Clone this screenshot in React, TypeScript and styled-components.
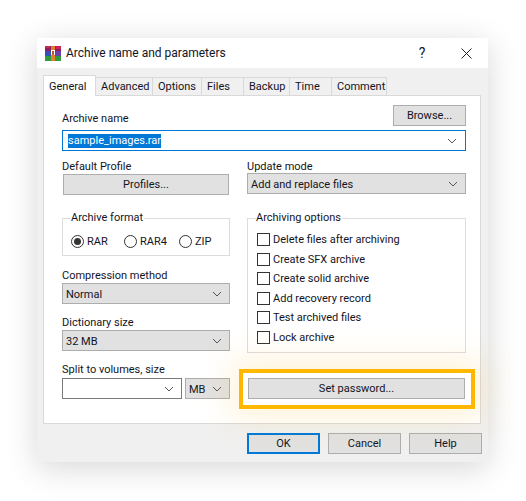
import React from 'react';
import styled, { createGlobalStyle } from 'styled-components';

const GlobalStyle = createGlobalStyle`
  html, body {
    margin: 0;
    padding: 0;
    background: #ffffff;
  }
  * {
    box-sizing: border-box;
  }
`;

const Page = styled.div`
  width: 526px;
  height: 501px;
  padding: 38px 38px 39px 37px;
  overflow: hidden;
  font-family: Roboto, 'Open Sans', sans-serif;
  font-size: 11px;
  color: #14141e;
`;

const Dialog = styled.div`
  width: 451px;
  height: 424px;
  background: #f0f0f0;
  box-shadow: 0 6px 30px rgba(0, 0, 0, 0.16);
`;

const TitleBar = styled.div`
  height: 30px;
  background: #ffffff;
  display: flex;
  align-items: center;
  padding-left: 8px;
`;

const Title = styled.span`
  margin-left: 5px;
  font-size: 12px;
  flex: 1;
`;

const HelpMark = styled.span`
  width: 46px;
  text-align: center;
  font-size: 14px;
`;

const CloseButton = styled.span`
  width: 43px;
  display: flex;
  justify-content: center;
`;

const Body = styled.div`
  padding: 7px 7px 0 6px;
`;

const TabRow = styled.div`
  display: flex;
  align-items: flex-end;
  height: 21px;
  margin-bottom: -1px;
  position: relative;
`;

const Tab = styled.div<{ $w: number; $active?: boolean }>`
  width: ${p => p.$w}px;
  height: ${p => (p.$active ? 21 : 19)}px;
  border: 1px solid #d9d9d9;
  border-left-width: ${p => (p.$active ? 1 : 0)}px;
  border-bottom-width: ${p => (p.$active ? 0 : 1)}px;
  background: ${p => (p.$active ? '#ffffff' : '#f0f0f0')};
  display: flex;
  align-items: center;
  padding-left: 5px;
  white-space: nowrap;
  position: relative;
  z-index: ${p => (p.$active ? 1 : 0)};
`;

const Panel = styled.div`
  width: 438px;
  height: 329px;
  background: #ffffff;
  border: 1px solid #d9d9d9;
  padding: 9px 0 0 18px;
`;

const NameHead = styled.div`
  width: 404px;
  height: 21px;
  display: flex;
  align-items: flex-end;
  justify-content: space-between;
`;

const Label = styled.div<{ $tight?: boolean; $top?: number }>`
  height: 17px;
  line-height: 17px;
  padding-top: 1px;
  white-space: nowrap;
  margin-top: ${p => p.$top ?? 0}px;
  margin-bottom: ${p => (p.$tight ? -1 : 0)}px;
`;

const Button = styled.div<{ $w?: number; $focus?: boolean }>`
  width: ${p => (p.$w ? `${p.$w}px` : 'auto')};
  height: 21px;
  background: #e1e1e1;
  border: ${p => (p.$focus ? '2px solid #0078d7' : '1px solid #adadad')};
  display: flex;
  align-items: center;
  justify-content: center;
  white-space: nowrap;
`;

const InsetButton = styled(Button)`
  margin: 0 1px;
`;

const NameCombo = styled.div`
  width: 404px;
  height: 21px;
  margin-top: 4px;
  border: 1px solid #0078d7;
  background: #ffffff;
  display: flex;
  align-items: center;
  padding: 0 8px 0 5px;
  justify-content: space-between;
`;

const SelectedText = styled.span`
  background: #0078d7;
  color: #ffffff;
  height: 14px;
  line-height: 14px;
`;

const Columns = styled.div`
  width: 404px;
  margin-top: 6px;
  display: grid;
  grid-template-columns: 168px 219px;
  column-gap: 17px;
`;

const Column = styled.div`
  display: flex;
  flex-direction: column;
`;

const Select = styled.div<{ $w?: number; $white?: boolean }>`
  width: ${p => (p.$w ? `${p.$w}px` : '100%')};
  height: 21px;
  background: ${p => (p.$white ? '#ffffff' : '#e1e1e1')};
  border: 1px solid ${p => (p.$white ? '#7a7a7a' : '#adadad')};
  display: flex;
  align-items: center;
  justify-content: space-between;
  padding: 1px 7px 0 3px;
  white-space: nowrap;
`;

const Group = styled.fieldset<{ $h: number; $top: number }>`
  margin: ${p => p.$top}px 0 0 0;
  padding: 0 0 0 9px;
  height: ${p => p.$h}px;
  border: 1px solid #dcdcdc;
  min-inline-size: 0;
`;

const Legend = styled.legend`
  padding: 0 1px 0 0;
  margin-left: -1px;
  line-height: 16px;
  height: 16px;
`;

const RadioRow = styled.div`
  display: flex;
  align-items: center;
  height: 20px;
  margin: 5px 0 0 -1px;
`;

const RadioItem = styled.div<{ $w: number }>`
  width: ${p => p.$w}px;
  display: flex;
  align-items: center;
  gap: 3px;
`;

const RadioMark = styled.span<{ $on?: boolean }>`
  width: 13px;
  height: 13px;
  border-radius: 50%;
  border: 1px solid #333333;
  background: #ffffff;
  display: flex;
  align-items: center;
  justify-content: center;

  &::after {
    content: '';
    display: ${p => (p.$on ? 'block' : 'none')};
    width: 7px;
    height: 7px;
    border-radius: 50%;
    background: #333333;
  }
`;

const CheckList = styled.div`
  margin-top: 4px;
  display: flex;
  flex-direction: column;
`;

const CheckRow = styled.div`
  height: 19.5px;
  display: flex;
  align-items: center;
  gap: 3px;
  white-space: nowrap;
`;

const CheckBox = styled.span`
  width: 13px;
  height: 13px;
  border: 1px solid #333333;
  background: #ffffff;
`;

const SplitRow = styled.div`
  display: flex;
  justify-content: space-between;
  margin-top: 1px;
`;

const PasswordSlot = styled.div`
  margin-top: 25px;
  position: relative;

  &::before {
    content: '';
    position: absolute;
    inset: -9px -9px -10px -8px;
    background: #ffffff;
    border: 4px solid #ffb700;
    box-shadow: 0 0 34px 8px rgba(255, 190, 60, 0.2);
  }
`;

const PasswordButton = styled(InsetButton)`
  position: relative;
`;

const Footer = styled.div`
  display: flex;
  justify-content: flex-end;
  gap: 8px;
  margin-top: 9px;
  margin-right: -1px;
`;

const Chevron = () => (
  <svg width="10" height="6" viewBox="0 0 10 6" fill="none">
    <path d="M1 1l4 4 4-4" stroke="#555" strokeWidth="1" />
  </svg>
);

const CloseIcon = () => (
  <svg width="11" height="11" viewBox="0 0 11 11" fill="none">
    <path d="M.5.5l10 10M10.5.5l-10 10" stroke="#222" strokeWidth="1" />
  </svg>
);

const RarLogo = () => (
  <svg width="16" height="15" viewBox="0 0 16 15">
    <rect x="0" y="0" width="16" height="5" fill="#8e1f5c" />
    <rect x="0" y="0" width="5" height="2" fill="#b8324a" />
    <rect x="11" y="0" width="5" height="3" fill="#d0245e" />
    <rect x="0" y="5" width="16" height="5" fill="#3750b8" />
    <rect x="11" y="5" width="5" height="5" fill="#6a3fb0" />
    <rect x="0" y="10" width="16" height="5" fill="#2f9a3a" />
    <rect x="6" y="0" width="4" height="15" fill="#e2802a" />
    <rect x="6" y="4" width="4" height="5" fill="#ffffff" />
    <rect x="7" y="5" width="2" height="4" fill="#c8501c" />
  </svg>
);

const tabs = [
  { name: 'General', w: 53, active: true },
  { name: 'Advanced', w: 57 },
  { name: 'Options', w: 49 },
  { name: 'Files', w: 42 },
  { name: 'Backup', w: 46 },
  { name: 'Time', w: 42 },
  { name: 'Comment', w: 55 },
];

const options = [
  'Delete files after archiving',
  'Create SFX archive',
  'Create solid archive',
  'Add recovery record',
  'Test archived files',
  'Lock archive',
];

export default function App() {
  return (
    <Page>
      <GlobalStyle />
      <Dialog>
        <TitleBar>
          <RarLogo />
          <Title>Archive name and parameters</Title>
          <HelpMark>?</HelpMark>
          <CloseButton>
            <CloseIcon />
          </CloseButton>
        </TitleBar>
        <Body>
          <TabRow>
            {tabs.map(t => (
              <Tab key={t.name} $w={t.w} $active={t.active}>
                {t.name}
              </Tab>
            ))}
          </TabRow>
          <Panel>
            <NameHead>
              <Label>Archive name</Label>
              <Button $w={73}>Browse...</Button>
            </NameHead>
            <NameCombo>
              <SelectedText>sample_images.rar</SelectedText>
              <Chevron />
            </NameCombo>
            <Columns>
              <Column>
                <Label>Default Profile</Label>
                <InsetButton>Profiles...</InsetButton>
                <Group $h={46} $top={15}>
                  <Legend>Archive format</Legend>
                  <RadioRow>
                    <RadioItem $w={53}>
                      <RadioMark $on />
                      RAR
                    </RadioItem>
                    <RadioItem $w={55}>
                      <RadioMark />
                      RAR4
                    </RadioItem>
                    <RadioItem $w={45}>
                      <RadioMark />
                      ZIP
                    </RadioItem>
                  </RadioRow>
                </Group>
                <Label $top={10}>Compression method</Label>
                <Select>
                  Normal
                  <Chevron />
                </Select>
                <Label $top={9}>Dictionary size</Label>
                <Select>
                  32 MB
                  <Chevron />
                </Select>
                <Label $top={9}>Split to volumes, size</Label>
                <SplitRow>
                  <Select $w={120} $white>
                    <span />
                    <Chevron />
                  </Select>
                  <Select $w={45}>
                    MB
                    <Chevron />
                  </Select>
                </SplitRow>
              </Column>
              <Column>
                <Label $tight>Update mode</Label>
                <Select>
                  Add and replace files
                  <Chevron />
                </Select>
                <Group $h={143} $top={16}>
                  <Legend>Archiving options</Legend>
                  <CheckList>
                    {options.map(o => (
                      <CheckRow key={o}>
                        <CheckBox />
                        {o}
                      </CheckRow>
                    ))}
                  </CheckList>
                </Group>
                <PasswordSlot>
                  <PasswordButton>Set password...</PasswordButton>
                </PasswordSlot>
              </Column>
            </Columns>
          </Panel>
          <Footer>
            <Button $w={73} $focus>OK</Button>
            <Button $w={73}>Cancel</Button>
            <Button $w={73}>Help</Button>
          </Footer>
        </Body>
      </Dialog>
    </Page>
  );
}
